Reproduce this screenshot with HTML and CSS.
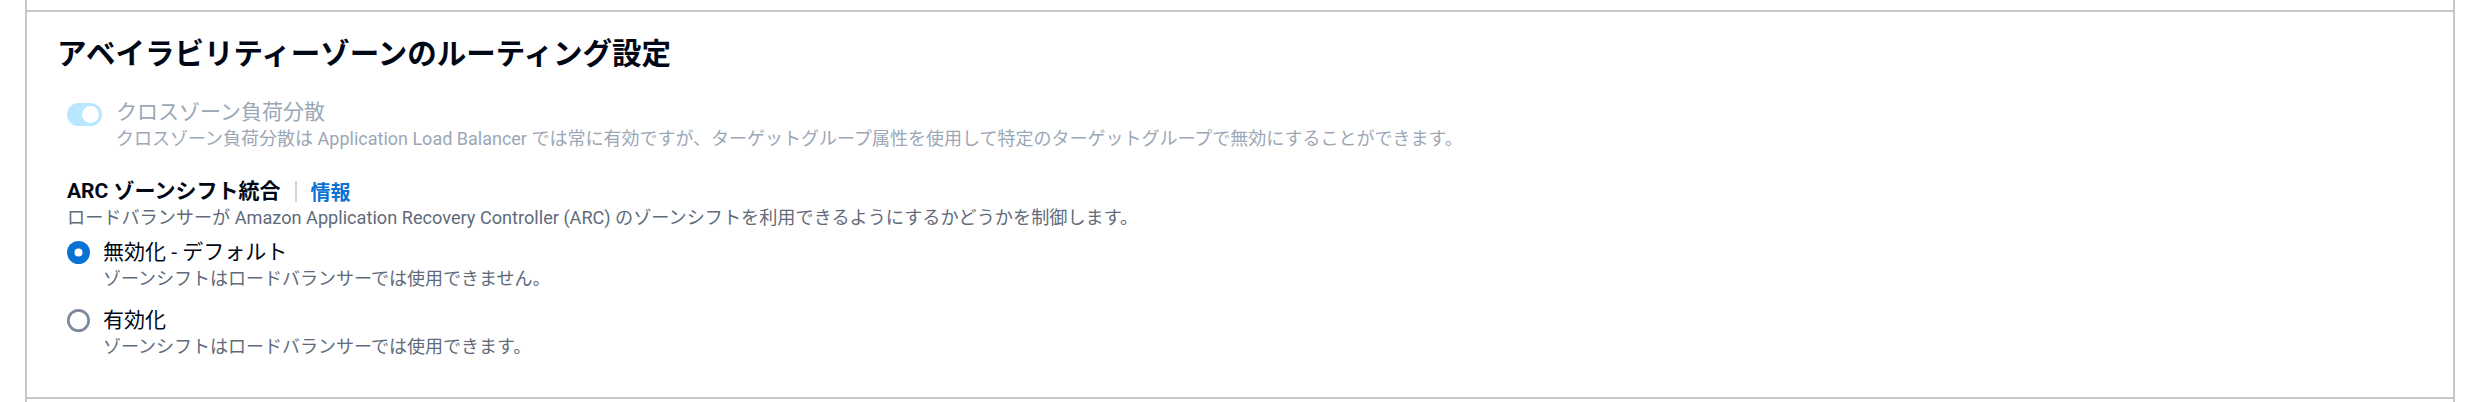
FILE: index.html
```html
<!DOCTYPE html>
<html lang="ja">
<head>
<meta charset="utf-8">
<link rel="stylesheet" href="styles.css">
</head>
<body>
<div class="wrap">
  <div class="stub stub-top"></div>
  <section class="section">
    <h2 class="title">アベイラビリティーゾーンのルーティング設定</h2>

    <div class="toggle-field">
      <span class="toggle"><span class="knob"></span></span>
      <div class="toggle-text">
        <div class="toggle-label">クロスゾーン負荷分散</div>
        <div class="toggle-desc">クロスゾーン負荷分散は Application Load Balancer では常に有効ですが、ターゲットグループ属性を使用して特定のターゲットグループで無効にすることができます。</div>
      </div>
    </div>

    <div class="field">
      <div class="field-label">
        <span class="label-text">ARC ゾーンシフト統合</span>
        <span class="divider"></span>
        <a class="info">情報</a>
      </div>
      <div class="field-desc">ロードバランサーが Amazon Application Recovery Controller (ARC) のゾーンシフトを利用できるようにするかどうかを制御します。</div>

      <div class="radio-group">
        <div class="radio">
          <svg class="radio-icon" viewBox="0 0 24 24" width="23" height="23">
            <circle cx="12" cy="12" r="12" fill="#0972d3"/>
            <circle cx="12" cy="12" r="4.2" fill="#ffffff"/>
          </svg>
          <div class="radio-text">
            <div class="radio-label">無効化 - デフォルト</div>
            <div class="radio-desc">ゾーンシフトはロードバランサーでは使用できません。</div>
          </div>
        </div>
        <div class="radio">
          <svg class="radio-icon" viewBox="0 0 24 24" width="23" height="23">
            <circle cx="12" cy="12" r="10.6" fill="#ffffff" stroke="#7d8998" stroke-width="2.8"/>
          </svg>
          <div class="radio-text">
            <div class="radio-label">有効化</div>
            <div class="radio-desc">ゾーンシフトはロードバランサーでは使用できます。</div>
          </div>
        </div>
      </div>
    </div>
  </section>
  <div class="stub stub-bottom"></div>
</div>
</body>
</html>
```

FILE: styles.css
```css
* { box-sizing: border-box; }
html, body { margin: 0; padding: 0; background: #ffffff; }
body {
  font-family: Roboto, "Noto Sans CJK JP", sans-serif;
  color: #000716;
}
.wrap {
  margin: 0 37px 0 25px;
  border-left: 2px solid #c6c6cd;
  border-right: 2px solid #c6c6cd;
  height: 402px;
  display: flex;
  flex-direction: column;
}
.stub-top {
  height: 12px;
  border-bottom: 2px solid #c6c6cd;
}
.section {
  padding: 24px 40px 39px 40px;
  border-bottom: 2px solid #c6c6cd;
}
.stub-bottom { flex: 1; }

.title {
  margin: 0 0 25px -10px;
  font-size: 29.5px;
  line-height: 37px;
  font-weight: 700;
  color: #000716;
}

.toggle-field {
  display: flex;
  align-items: flex-start;
  gap: 14px;
}
.toggle {
  flex: none;
  margin-top: 5px;
  width: 35px;
  height: 23px;
  border-radius: 12px;
  background: #b8e7ff;
  display: flex;
  align-items: center;
  justify-content: flex-end;
  padding-right: 3px;
}
.knob {
  width: 17px;
  height: 17px;
  border-radius: 50%;
  background: #ffffff;
}
.toggle-label {
  font-size: 21px;
  line-height: 29px;
  color: #9ba7b6;
}
.toggle-desc {
  font-size: 18px;
  line-height: 23px;
  color: #9ba7b6;
}

.field { margin-top: 27px; }
.field-label {
  display: flex;
  align-items: center;
  height: 29px;
}
.label-text {
  font-size: 21px;
  font-weight: 700;
  line-height: 29px;
  color: #000716;
}
.divider {
  width: 2px;
  height: 21px;
  background: #d1d5db;
  margin: 0 13px 0 15px;
}
.info {
  font-size: 20px;
  font-weight: 700;
  color: #0972d3;
  text-decoration: none;
}
.field-desc {
  font-size: 18.15px;
  line-height: 23px;
  color: #5f6b7a;
}

.radio-group {
  margin-top: 9px;
  display: flex;
  flex-direction: column;
  gap: 16px;
}
.radio {
  display: flex;
  align-items: flex-start;
  gap: 13px;
}
.radio-icon {
  flex: none;
  margin-top: 3px;
}
.radio-label {
  font-size: 21px;
  line-height: 29px;
  color: #000716;
}
.radio-desc {
  font-size: 18px;
  line-height: 23px;
  color: #5f6b7a;
}
```
